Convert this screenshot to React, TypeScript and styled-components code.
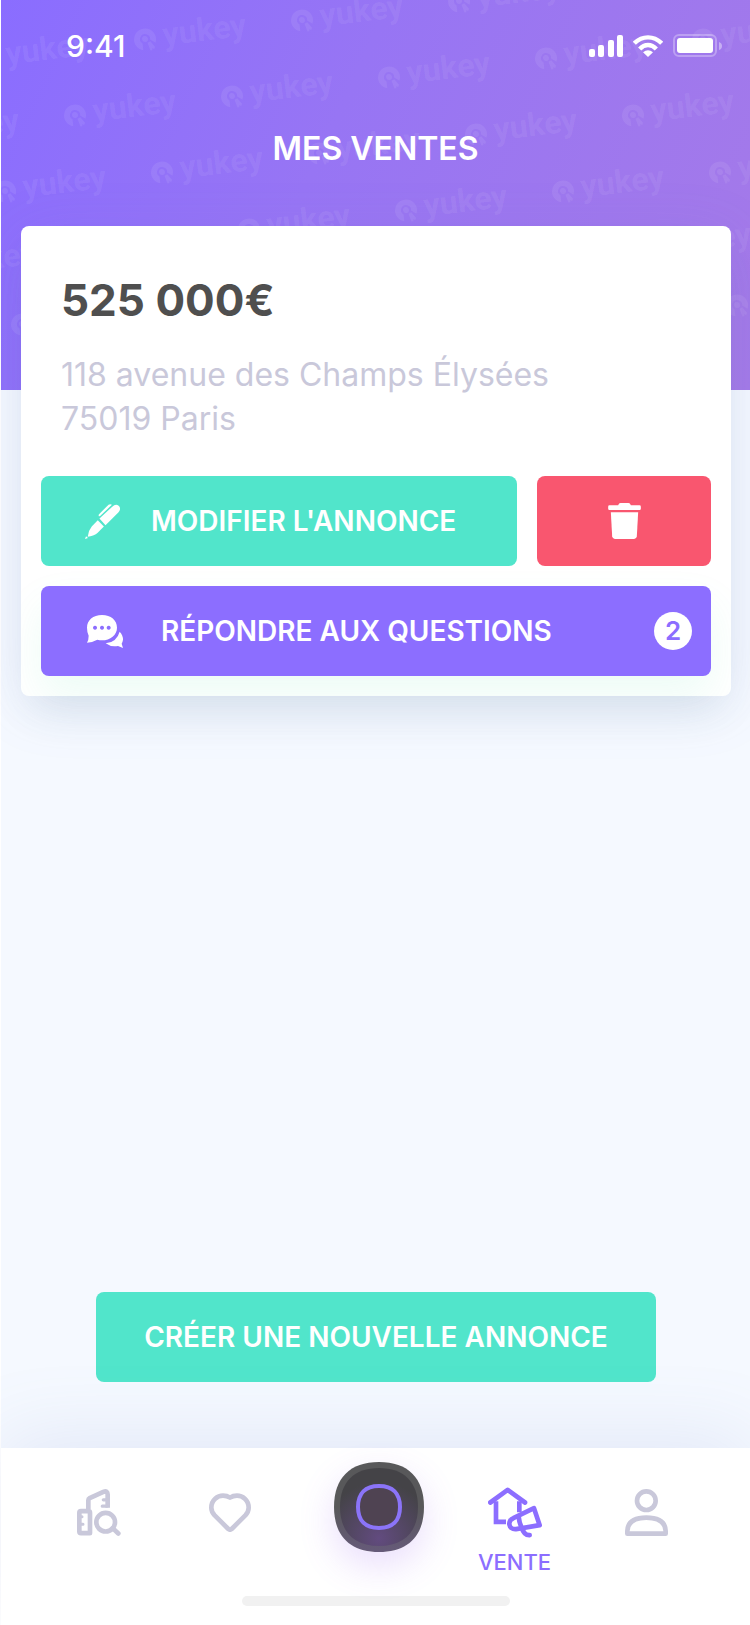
import React from "react";
import styled, { createGlobalStyle } from "styled-components";

const GlobalStyle = createGlobalStyle`
  * { box-sizing: border-box; }
  body {
    margin: 0;
    background: #fff;
    font-family: Inter, "Liberation Sans", sans-serif;
  }
`;

const Screen = styled.div`
  display: flex;
  flex-direction: column;
  min-height: 100vh;
  margin-left: 1px;
  background: #f5f9ff;
`;

const Header = styled.header`
  position: relative;
  height: 390px;
  overflow: hidden;
  color: #fff;
  background: linear-gradient(115deg, #8a6dff 0%, #9775f4 42%, #a57ae8 100%);
`;

const Watermark = styled.svg`
  position: absolute;
  inset: 0;
  width: 100%;
  height: 100%;
`;

const StatusBar = styled.div`
  position: relative;
  display: flex;
  align-items: center;
  justify-content: space-between;
  height: 92px;
  padding: 0 28px 0 65px;
`;

const Clock = styled.time`
  font-size: 30px;
  font-weight: 500;
  line-height: 36px;
`;

const StatusIcons = styled.div`
  display: flex;
  align-items: center;
  gap: 10px;
`;

const Title = styled.h1`
  position: relative;
  margin: 37px 0 0;
  font-size: 32px;
  font-weight: 600;
  line-height: 40px;
  text-align: center;
`;

const Main = styled.main`
  position: relative;
  flex: 1;
  display: flex;
  flex-direction: column;
  align-items: center;
  justify-content: space-between;
  margin-top: -164px;
  padding: 0 19px 66px 20px;
`;

const Card = styled.article`
  width: 100%;
  padding: 20px;
  border-radius: 8px;
  background: #fff;
  overflow: hidden;
  box-shadow: 0 10px 60px rgba(112, 112, 210, 0.12), 0 24px 40px -12px rgba(60, 120, 110, 0.12);
`;

const Details = styled.div`
  padding: 32px 20px 35px;
`;

const Price = styled.h2`
  margin: 0 0 31px;
  font-size: 44px;
  font-weight: 700;
  line-height: 44px;
  color: #4f4f4f;
`;

const Address = styled.address`
  font-size: 32px;
  font-style: normal;
  font-weight: 400;
  line-height: 44px;
  color: #c9c8da;
`;

const Actions = styled.div`
  display: flex;
  gap: 20px;
  margin-bottom: 20px;
`;

const tones = { mint: "#51e5cb", violet: "#8c6eff", coral: "#f9566f" };

const Button = styled.button<{ $tone: keyof typeof tones }>`
  display: flex;
  align-items: center;
  justify-content: center;
  height: 90px;
  border: 0;
  border-radius: 8px;
  background: ${(p) => tones[p.$tone]};
  color: #fff;
  font-family: inherit;
  font-size: 28px;
  font-weight: 600;
  line-height: 36px;
  cursor: pointer;
`;

const WideButton = styled(Button)`
  flex: 1;
  justify-content: flex-start;
  gap: 31px;
  padding: 0 19px 0 44px;
`;

const QuestionsButton = styled(WideButton)`
  width: 100%;
  gap: 38px;
  padding-left: 46px;
  box-shadow: 0 20px 40px rgba(81, 229, 170, 0.1);
`;

const DeleteButton = styled(Button)`
  width: 174px;
`;

const CreateButton = styled(Button)`
  width: 560px;
  max-width: 100%;
`;

const Count = styled.span`
  display: flex;
  align-items: center;
  justify-content: center;
  width: 38px;
  height: 38px;
  margin-left: auto;
  border-radius: 50%;
  background: #fff;
  color: #8c6eff;
  font-size: 26px;
`;

const Footer = styled.footer`
  position: relative;
  padding-bottom: 19px;
  background: #fff;
  box-shadow: 0 -10px 80px rgba(110, 130, 200, 0.14);
`;

const Nav = styled.nav`
  display: grid;
  grid-template-columns: 132fr 130fr 168fr 103fr 161fr;
  height: 148px;
  padding: 14px 23px 0 32px;
`;

const NavLink = styled.a<{ $active?: boolean }>`
  display: flex;
  flex-direction: column;
  align-items: center;
  gap: 12px;
  color: ${(p) => (p.$active ? "#8c6eff" : "#c9c8da")};
  font-size: 22px;
  font-weight: 500;
  line-height: 24px;
  text-decoration: none;
`;

const IconSlot = styled.span`
  display: flex;
  align-items: center;
  justify-content: center;
  height: 76px;
  padding-top: 24px;
`;

const Home = styled.button`
  display: block;
  justify-self: center;
  width: 90px;
  height: 90px;
  padding: 0;
  border: 0;
  border-radius: 40px;
  background: none;
  box-shadow: 0 14px 36px rgba(150, 90, 240, 0.2);
  cursor: pointer;
`;

const HomeIndicator = styled.div`
  width: 268px;
  height: 10px;
  margin: 0 auto;
  border-radius: 5px;
  background: #f1f1f1;
`;

const Logo = ({ x, y }: { x: number; y: number }) => (
  <g transform={`translate(${x} ${y}) rotate(-7)`}>
    <path d="M-3 11 A11 11 0 1 1 10 5 L5 1 A5 5 0 1 0 -3 4 Z" />
    <path d="M2 4 L5 3 L9 9 L8 11 L6 10 L6 12 L4 12 Z" />
    <circle cx="0" cy="0" r="3" />
    <text x="18" y="9" fontFamily="Roboto, sans-serif" fontSize="32" fontWeight="700">yukey</text>
  </g>
);

// Repeats the logo on a slanted grid, leaving out the marks that the card covers.
const marks: { x: number; y: number }[] = [];
for (let row = -2; row < 6; row++) {
  for (let col = -1; col < 12; col++) {
    const x = 144 - row * 70 + col * 157;
    const y = 39 + row * 76 - col * 19;
    const covered = y > 240 && x > 30 && x < 640;
    if (x > -110 && x < 1600 && y > -15 && y < 400 && !covered) marks.push({ x, y });
  }
}

const SignalIcon = () => (
  <svg width="34" height="22" viewBox="0 0 34 22" fill="#fff" role="img" aria-label="Réseau">
    <rect x="0" y="14" width="6" height="8" rx="2" />
    <rect x="9" y="10" width="6" height="12" rx="2" />
    <rect x="19" y="5" width="6" height="17" rx="2" />
    <rect x="28" y="0" width="6" height="22" rx="2" />
  </svg>
);

const WifiIcon = () => (
  <svg width="30" height="22" viewBox="0 0 90 66" fill="none" stroke="#fff" strokeWidth="13" role="img" aria-label="Wi-Fi">
    <path d="M4 25 Q22 7 45 7 Q68 7 86 25" />
    <path d="M20 42 Q31 30 45 30 Q59 30 70 42" />
    <path d="M45 66 L30 52 Q45 40 60 52 Z" fill="#fff" stroke="none" />
  </svg>
);

const BatteryIcon = () => (
  <svg width="49" height="24" viewBox="0 0 49 24" role="img" aria-label="Batterie">
    <rect x="1" y="1" width="42" height="21" rx="5" fill="none" stroke="#fff" strokeWidth="2" opacity="0.3" />
    <rect x="4" y="4" width="36" height="15" rx="3" fill="#fff" />
    <path d="M46 8 Q49 9 49 12 Q49 15 46 16 Z" fill="#fff" opacity="0.4" />
  </svg>
);

const PenIcon = () => (
  <svg width="35" height="35" viewBox="0 0 104 104" fill="currentColor" aria-hidden="true">
    <path d="M43 43 L81 8 Q91 -2 100 5 Q109 14 99 25 L61 63 Z" />
    <path d="M38 48 L56 67 L37 86 Q25 96 8 97 Q10 79 20 67 Z" />
    <path d="M0 104 L3 96 L9 101 Z" />
    <path d="M41 31 L70 2 Q75 -1 80 2 L45 36 Q39 38 41 31 Z" />
  </svg>
);

const ChatIcon = () => (
  <svg width="36" height="33" viewBox="0 0 108 99" fill="currentColor" aria-hidden="true">
    <path
      fillRule="evenodd"
      d="M45 0 C72 0 90 16 90 38 C90 60 70 76 45 76 Q38 76 31 74 Q17 82 0 83 Q5 75 5 62 Q0 52 0 38 C0 16 18 0 45 0 Z M24 32 a6 6 0 1 0 .1 0 Z M45 32 a6 6 0 1 0 .1 0 Z M65 32 a6 6 0 1 0 .1 0 Z"
    />
    <path d="M98 50 Q108 60 108 74 Q107 81 104 86 L108 99 L93 93 Q72 97 56 85 Q89 82 98 50 Z" />
  </svg>
);

const TrashIcon = () => (
  <svg width="33" height="36" viewBox="0 0 98 108" fill="currentColor" aria-hidden="true">
    <path d="M30 7 Q32 0 37 0 H61 Q66 0 68 7 H94 Q98 7 98 11 V17 Q98 21 94 21 H4 Q0 21 0 17 V11 Q0 7 4 7 Z" />
    <path d="M8 28 H90 L86 100 Q85 108 78 108 H20 Q13 108 12 100 Z" />
  </svg>
);

const strokeProps = {
  fill: "none",
  stroke: "currentColor",
  strokeLinecap: "round" as const,
  strokeLinejoin: "round" as const,
  strokeWidth: 14,
  "aria-hidden": true,
};

const BuildingSearchIcon = () => (
  <svg width="44" height="47" viewBox="0 0 132 140" {...strokeProps}>
    <path d="M34 60 V33 Q34 29 38 27 L79 8 Q92 3 92 16 V56" strokeLinecap="butt" />
    <path d="M90 51 H76 M90 32 H79" strokeWidth="10" />
    <path d="M7 71 Q7 66 12 66 H34 Q39 66 39 71 V132 H12 Q7 132 7 127 Z" />
    <path d="M10 83 H15 M10 105 H18" strokeWidth="9" />
    <circle cx="86" cy="99" r="28" />
    <path d="M107 117 L124 133" />
  </svg>
);

const HeartIcon = () => (
  <svg width="42" height="39" viewBox="0 0 126 117" {...strokeProps}>
    <path d="M63 14 Q54 8 42 8 C26 8 7 20 7 44 Q7 56 17 67 L58 108 Q63 112 68 108 L109 67 Q119 56 119 44 C119 20 100 8 84 8 Q72 8 63 14 Z" />
  </svg>
);

const SellIcon = () => (
  <svg width="54" height="51" viewBox="0 0 162 152" {...strokeProps}>
    <path d="M7 46 L59 8 L111 46" />
    <path d="M24 42 V104 H54 M94 42 V75" strokeLinecap="butt" strokeLinejoin="miter" />
    <path d="M76 93 L138 63 L155 114 L84 126 C60 128 58 99 76 93 Z" />
    <path d="M92 89 Q94 108 101 121 Q108 145 125 144" />
  </svg>
);

const ProfileIcon = () => (
  <svg width="43" height="49" viewBox="0 0 129 145" {...strokeProps}>
    <circle cx="64" cy="37" r="28" />
    <path d="M7 136 V128 C8 99 30 88 64 88 C98 88 121 99 122 128 V136 Z" />
  </svg>
);

const HomeIcon = () => (
  <svg width="90" height="90" viewBox="0 0 270 270" aria-hidden="true">
    <defs>
      <linearGradient id="rim" x1="0" y1="0" x2="0" y2="1">
        <stop offset="0.5" stopColor="#58585a" />
        <stop offset="1" stopColor="#665a79" />
      </linearGradient>
      <radialGradient id="core" cx="0.5" cy="0.9" r="0.72">
        <stop offset="0" stopColor="#624b7f" />
        <stop offset="1" stopColor="#444347" />
      </radialGradient>
    </defs>
    <path fill="url(#rim)" d="M135 0 C222 0 270 48 270 135 C270 222 222 270 135 270 C48 270 0 222 0 135 C0 48 48 0 135 0 Z" />
    <path fill="url(#core)" d="M135 18 C210 18 252 60 252 135 C252 210 210 252 135 252 C60 252 18 210 18 135 C18 60 60 18 135 18 Z" />
    <path
      fill="#4f4352"
      stroke="#8b74f8"
      strokeWidth="12"
      d="M135 72 C176 72 198 94 198 135 C198 176 176 198 135 198 C94 198 72 176 72 135 C72 94 94 72 135 72 Z"
    />
  </svg>
);

export default function App() {
  return (
    <>
      <GlobalStyle />
      <Screen>
        <Header>
          <Watermark fill="#fff" fillOpacity="0.08" aria-hidden="true">
            {marks.map((m) => (
              <Logo key={`${m.x}-${m.y}`} x={m.x} y={m.y} />
            ))}
          </Watermark>
          <StatusBar>
            <Clock>9:41</Clock>
            <StatusIcons>
              <SignalIcon />
              <WifiIcon />
              <BatteryIcon />
            </StatusIcons>
          </StatusBar>
          <Title>MES VENTES</Title>
        </Header>
        <Main>
          <Card>
            <Details>
              <Price>525 000€</Price>
              <Address>
                118 avenue des Champs Élysées
                <br />
                75019 Paris
              </Address>
            </Details>
            <Actions>
              <WideButton type="button" $tone="mint">
                <PenIcon />
                MODIFIER L'ANNONCE
              </WideButton>
              <DeleteButton type="button" $tone="coral" aria-label="Supprimer l'annonce">
                <TrashIcon />
              </DeleteButton>
            </Actions>
            <QuestionsButton type="button" $tone="violet">
              <ChatIcon />
              RÉPONDRE AUX QUESTIONS
              <Count>2</Count>
            </QuestionsButton>
          </Card>
          <CreateButton type="button" $tone="mint">
            CRÉER UNE NOUVELLE ANNONCE
          </CreateButton>
        </Main>
        <Footer>
          <Nav aria-label="Navigation principale">
            <NavLink href="#recherche" aria-label="Recherche">
              <IconSlot><BuildingSearchIcon /></IconSlot>
            </NavLink>
            <NavLink href="#favoris" aria-label="Favoris">
              <IconSlot><HeartIcon /></IconSlot>
            </NavLink>
            <Home type="button" aria-label="Accueil">
              <HomeIcon />
            </Home>
            <NavLink href="#vente" $active aria-current="page">
              <IconSlot><SellIcon /></IconSlot>
              VENTE
            </NavLink>
            <NavLink href="#profil" aria-label="Profil">
              <IconSlot><ProfileIcon /></IconSlot>
            </NavLink>
          </Nav>
          <HomeIndicator />
        </Footer>
      </Screen>
    </>
  );
}
